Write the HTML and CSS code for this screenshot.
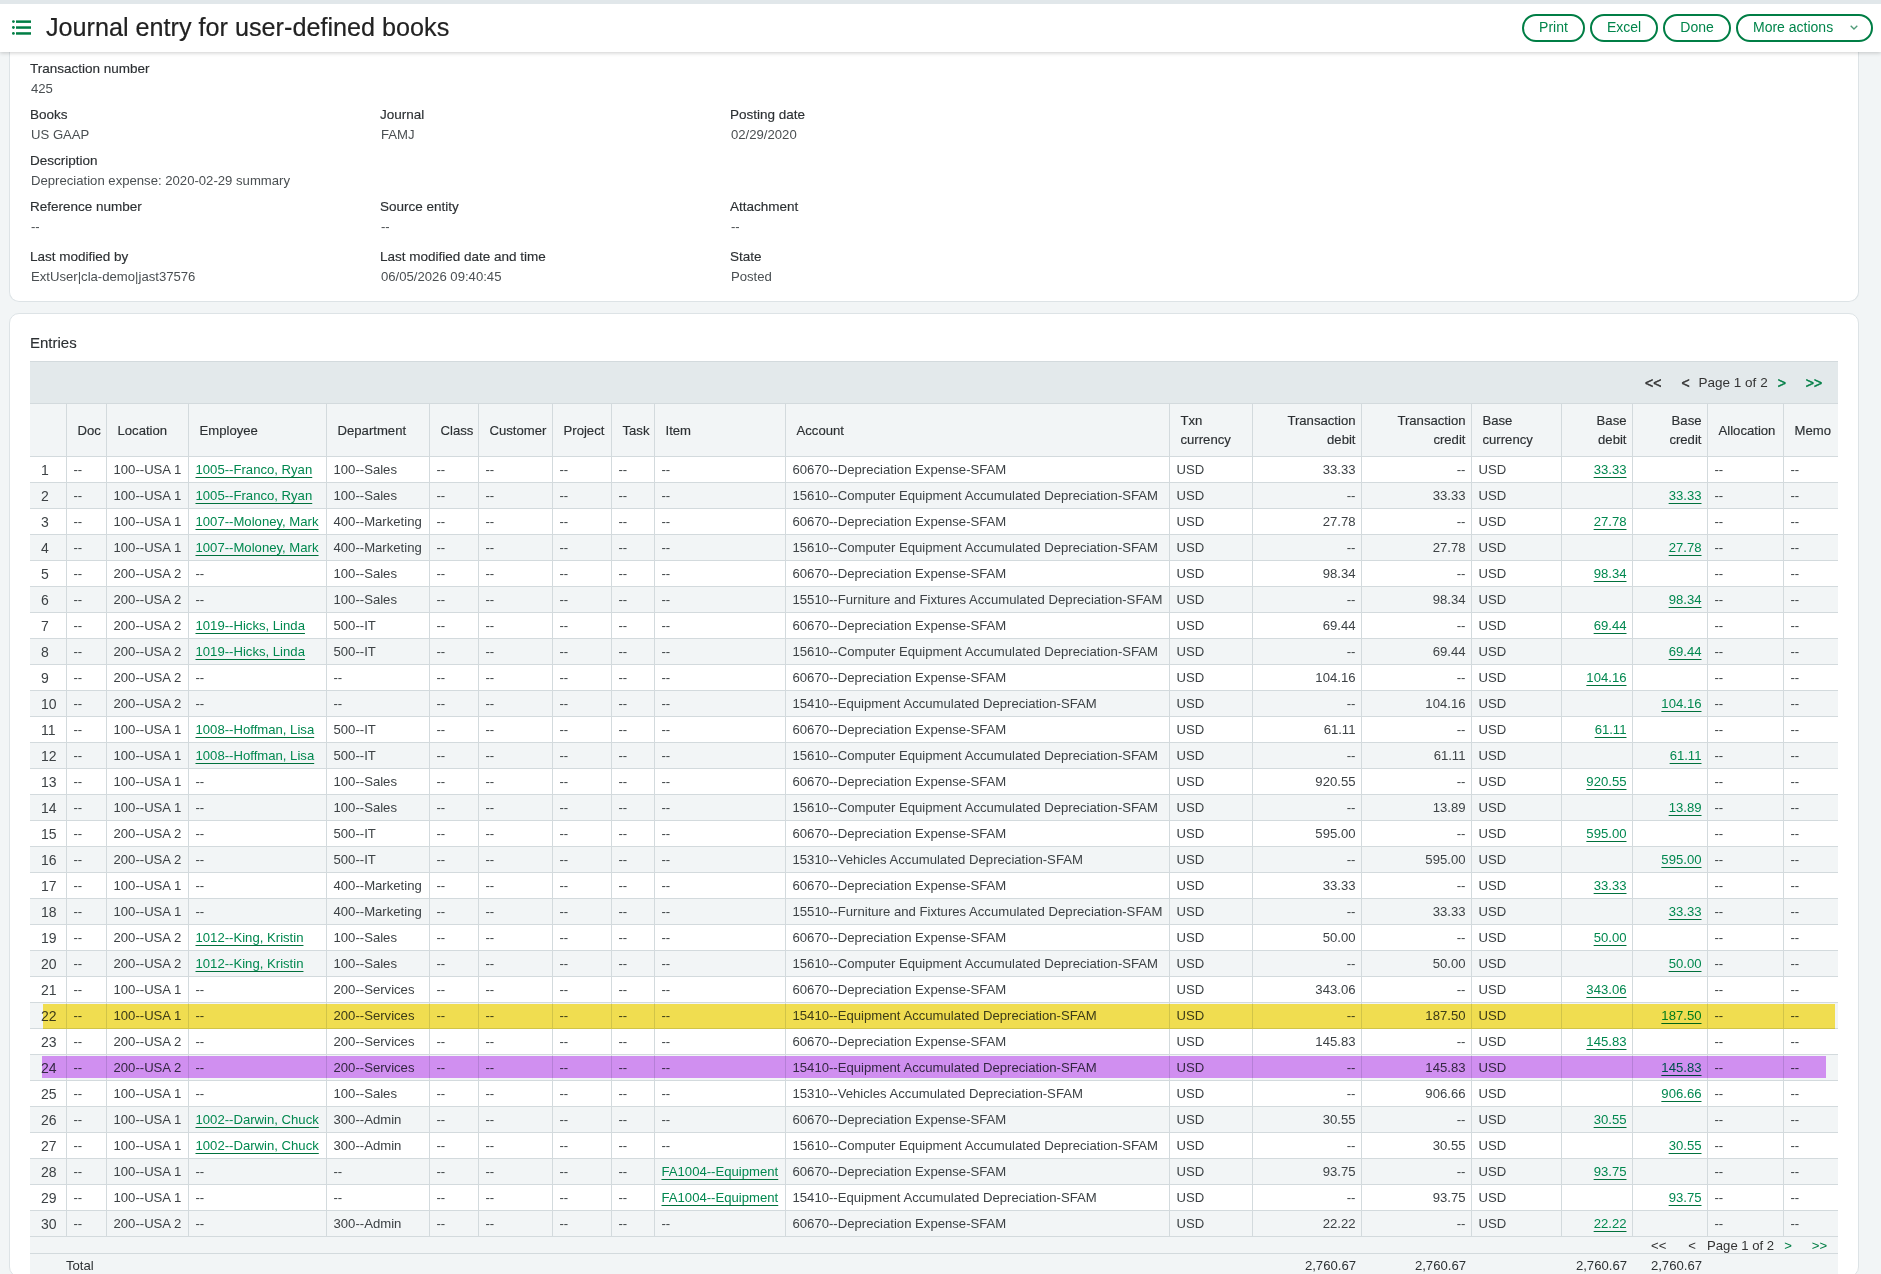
FILE: index.html
```html
<!DOCTYPE html>
<html lang="en">
  <head>
    <meta charset="utf-8">
    <meta name="viewport" content="width=device-width, initial-scale=1" />
    <title>Journal entry for user-defined books</title>
    <link rel="stylesheet" href="styles.css">
  </head>
  <body>
    <header class="page-header">
      <svg class="menu-icon" width="19" height="15" viewBox="0 0 19 15">
        <circle cx="1.4" cy="1.6" r="1.4"/>
        <circle cx="1.4" cy="7.5" r="1.4"/>
        <circle cx="1.4" cy="13.4" r="1.4"/>
        <rect x="4" y="0.4" width="15" height="2.5"/>
        <rect x="4" y="6.3" width="15" height="2.5"/>
        <rect x="4" y="12.2" width="15" height="2.5"/>
      </svg>
      <h1>Journal entry for user-defined books</h1>
      <div class="actions">
        <button class="btn btn-print">Print</button>
        <button class="btn btn-excel">Excel</button>
        <button class="btn btn-done">Done</button>
        <button class="btn btn-more">More actions
          <svg width="8" height="5" viewBox="0 0 8 5"><path d="M.7.7L4 4 7.3.7" fill="none" stroke="#4f9a78" stroke-width="1.3"/></svg>
        </button>
      </div>
    </header>

    <main class="content">
      <section class="card summary">
        <div class="field-row">
          <div class="field"><label>Transaction number</label><p>425</p></div>
        </div>
        <div class="field-row">
          <div class="field"><label>Books</label><p>US GAAP</p></div>
          <div class="field"><label>Journal</label><p>FAMJ</p></div>
          <div class="field"><label>Posting date</label><p>02/29/2020</p></div>
        </div>
        <div class="field-row">
          <div class="field wide"><label>Description</label><p>Depreciation expense: 2020-02-29 summary</p></div>
        </div>
        <div class="field-row">
          <div class="field"><label>Reference number</label><p>--</p></div>
          <div class="field"><label>Source entity</label><p>--</p></div>
          <div class="field"><label>Attachment</label><p>--</p></div>
        </div>
        <div class="field-row last">
          <div class="field"><label>Last modified by</label><p>ExtUser|cla-demo|jast37576</p></div>
          <div class="field"><label>Last modified date and time</label><p>06/05/2026 09:40:45</p></div>
          <div class="field"><label>State</label><p>Posted</p></div>
        </div>
      </section>

      <section class="card entries">
        <h2>Entries</h2>
        <table class="grid">
          <colgroup>
            <col class="c36"><col class="c40"><col class="c82"><col class="c138"><col class="c103"><col class="c49"><col class="c74"><col class="c59"><col class="c43"><col class="c131"><col class="c384"><col class="c83"><col class="c109"><col class="c110"><col class="c90"><col class="c71"><col class="c75"><col class="c76"><col class="c55">
          </colgroup>
          <thead>
            <tr class="toolbar">
              <td colspan="19">
                <div class="pager">
                  <b class="first">&lt;&lt;</b><b class="prev">&lt;</b><span>Page 1 of 2</span><b class="next">&gt;</b><b class="last">&gt;&gt;</b>
                </div>
              </td>
            </tr>
            <tr class="heads">
              <th></th><th>Doc</th><th>Location</th><th>Employee</th><th>Department</th><th>Class</th><th>Customer</th><th>Project</th><th>Task</th><th>Item</th><th>Account</th><th>Txn<br>currency</th><th>Transaction<br>debit</th><th>Transaction<br>credit</th><th>Base<br>currency</th><th>Base<br>debit</th><th>Base<br>credit</th><th>Allocation</th><th>Memo</th>
            </tr>
          </thead>
          <tbody>
            <tr><td>1</td><td>--</td><td>100--USA 1</td><td><a href="#">1005--Franco, Ryan</a></td><td>100--Sales</td><td>--</td><td>--</td><td>--</td><td>--</td><td>--</td><td>60670--Depreciation Expense-SFAM</td><td>USD</td><td>33.33</td><td>--</td><td>USD</td><td><a href="#">33.33</a></td><td></td><td>--</td><td>--</td></tr>
            <tr><td>2</td><td>--</td><td>100--USA 1</td><td><a href="#">1005--Franco, Ryan</a></td><td>100--Sales</td><td>--</td><td>--</td><td>--</td><td>--</td><td>--</td><td>15610--Computer Equipment Accumulated Depreciation-SFAM</td><td>USD</td><td>--</td><td>33.33</td><td>USD</td><td></td><td><a href="#">33.33</a></td><td>--</td><td>--</td></tr>
            <tr><td>3</td><td>--</td><td>100--USA 1</td><td><a href="#">1007--Moloney, Mark</a></td><td>400--Marketing</td><td>--</td><td>--</td><td>--</td><td>--</td><td>--</td><td>60670--Depreciation Expense-SFAM</td><td>USD</td><td>27.78</td><td>--</td><td>USD</td><td><a href="#">27.78</a></td><td></td><td>--</td><td>--</td></tr>
            <tr><td>4</td><td>--</td><td>100--USA 1</td><td><a href="#">1007--Moloney, Mark</a></td><td>400--Marketing</td><td>--</td><td>--</td><td>--</td><td>--</td><td>--</td><td>15610--Computer Equipment Accumulated Depreciation-SFAM</td><td>USD</td><td>--</td><td>27.78</td><td>USD</td><td></td><td><a href="#">27.78</a></td><td>--</td><td>--</td></tr>
            <tr><td>5</td><td>--</td><td>200--USA 2</td><td>--</td><td>100--Sales</td><td>--</td><td>--</td><td>--</td><td>--</td><td>--</td><td>60670--Depreciation Expense-SFAM</td><td>USD</td><td>98.34</td><td>--</td><td>USD</td><td><a href="#">98.34</a></td><td></td><td>--</td><td>--</td></tr>
            <tr><td>6</td><td>--</td><td>200--USA 2</td><td>--</td><td>100--Sales</td><td>--</td><td>--</td><td>--</td><td>--</td><td>--</td><td>15510--Furniture and Fixtures Accumulated Depreciation-SFAM</td><td>USD</td><td>--</td><td>98.34</td><td>USD</td><td></td><td><a href="#">98.34</a></td><td>--</td><td>--</td></tr>
            <tr><td>7</td><td>--</td><td>200--USA 2</td><td><a href="#">1019--Hicks, Linda</a></td><td>500--IT</td><td>--</td><td>--</td><td>--</td><td>--</td><td>--</td><td>60670--Depreciation Expense-SFAM</td><td>USD</td><td>69.44</td><td>--</td><td>USD</td><td><a href="#">69.44</a></td><td></td><td>--</td><td>--</td></tr>
            <tr><td>8</td><td>--</td><td>200--USA 2</td><td><a href="#">1019--Hicks, Linda</a></td><td>500--IT</td><td>--</td><td>--</td><td>--</td><td>--</td><td>--</td><td>15610--Computer Equipment Accumulated Depreciation-SFAM</td><td>USD</td><td>--</td><td>69.44</td><td>USD</td><td></td><td><a href="#">69.44</a></td><td>--</td><td>--</td></tr>
            <tr><td>9</td><td>--</td><td>200--USA 2</td><td>--</td><td>--</td><td>--</td><td>--</td><td>--</td><td>--</td><td>--</td><td>60670--Depreciation Expense-SFAM</td><td>USD</td><td>104.16</td><td>--</td><td>USD</td><td><a href="#">104.16</a></td><td></td><td>--</td><td>--</td></tr>
            <tr><td>10</td><td>--</td><td>200--USA 2</td><td>--</td><td>--</td><td>--</td><td>--</td><td>--</td><td>--</td><td>--</td><td>15410--Equipment Accumulated Depreciation-SFAM</td><td>USD</td><td>--</td><td>104.16</td><td>USD</td><td></td><td><a href="#">104.16</a></td><td>--</td><td>--</td></tr>
            <tr><td>11</td><td>--</td><td>100--USA 1</td><td><a href="#">1008--Hoffman, Lisa</a></td><td>500--IT</td><td>--</td><td>--</td><td>--</td><td>--</td><td>--</td><td>60670--Depreciation Expense-SFAM</td><td>USD</td><td>61.11</td><td>--</td><td>USD</td><td><a href="#">61.11</a></td><td></td><td>--</td><td>--</td></tr>
            <tr><td>12</td><td>--</td><td>100--USA 1</td><td><a href="#">1008--Hoffman, Lisa</a></td><td>500--IT</td><td>--</td><td>--</td><td>--</td><td>--</td><td>--</td><td>15610--Computer Equipment Accumulated Depreciation-SFAM</td><td>USD</td><td>--</td><td>61.11</td><td>USD</td><td></td><td><a href="#">61.11</a></td><td>--</td><td>--</td></tr>
            <tr><td>13</td><td>--</td><td>100--USA 1</td><td>--</td><td>100--Sales</td><td>--</td><td>--</td><td>--</td><td>--</td><td>--</td><td>60670--Depreciation Expense-SFAM</td><td>USD</td><td>920.55</td><td>--</td><td>USD</td><td><a href="#">920.55</a></td><td></td><td>--</td><td>--</td></tr>
            <tr><td>14</td><td>--</td><td>100--USA 1</td><td>--</td><td>100--Sales</td><td>--</td><td>--</td><td>--</td><td>--</td><td>--</td><td>15610--Computer Equipment Accumulated Depreciation-SFAM</td><td>USD</td><td>--</td><td>13.89</td><td>USD</td><td></td><td><a href="#">13.89</a></td><td>--</td><td>--</td></tr>
            <tr><td>15</td><td>--</td><td>200--USA 2</td><td>--</td><td>500--IT</td><td>--</td><td>--</td><td>--</td><td>--</td><td>--</td><td>60670--Depreciation Expense-SFAM</td><td>USD</td><td>595.00</td><td>--</td><td>USD</td><td><a href="#">595.00</a></td><td></td><td>--</td><td>--</td></tr>
            <tr><td>16</td><td>--</td><td>200--USA 2</td><td>--</td><td>500--IT</td><td>--</td><td>--</td><td>--</td><td>--</td><td>--</td><td>15310--Vehicles Accumulated Depreciation-SFAM</td><td>USD</td><td>--</td><td>595.00</td><td>USD</td><td></td><td><a href="#">595.00</a></td><td>--</td><td>--</td></tr>
            <tr><td>17</td><td>--</td><td>100--USA 1</td><td>--</td><td>400--Marketing</td><td>--</td><td>--</td><td>--</td><td>--</td><td>--</td><td>60670--Depreciation Expense-SFAM</td><td>USD</td><td>33.33</td><td>--</td><td>USD</td><td><a href="#">33.33</a></td><td></td><td>--</td><td>--</td></tr>
            <tr><td>18</td><td>--</td><td>100--USA 1</td><td>--</td><td>400--Marketing</td><td>--</td><td>--</td><td>--</td><td>--</td><td>--</td><td>15510--Furniture and Fixtures Accumulated Depreciation-SFAM</td><td>USD</td><td>--</td><td>33.33</td><td>USD</td><td></td><td><a href="#">33.33</a></td><td>--</td><td>--</td></tr>
            <tr><td>19</td><td>--</td><td>200--USA 2</td><td><a href="#">1012--King, Kristin</a></td><td>100--Sales</td><td>--</td><td>--</td><td>--</td><td>--</td><td>--</td><td>60670--Depreciation Expense-SFAM</td><td>USD</td><td>50.00</td><td>--</td><td>USD</td><td><a href="#">50.00</a></td><td></td><td>--</td><td>--</td></tr>
            <tr><td>20</td><td>--</td><td>200--USA 2</td><td><a href="#">1012--King, Kristin</a></td><td>100--Sales</td><td>--</td><td>--</td><td>--</td><td>--</td><td>--</td><td>15610--Computer Equipment Accumulated Depreciation-SFAM</td><td>USD</td><td>--</td><td>50.00</td><td>USD</td><td></td><td><a href="#">50.00</a></td><td>--</td><td>--</td></tr>
            <tr><td>21</td><td>--</td><td>100--USA 1</td><td>--</td><td>200--Services</td><td>--</td><td>--</td><td>--</td><td>--</td><td>--</td><td>60670--Depreciation Expense-SFAM</td><td>USD</td><td>343.06</td><td>--</td><td>USD</td><td><a href="#">343.06</a></td><td></td><td>--</td><td>--</td></tr>
            <tr class="mark-yellow"><td>22</td><td>--</td><td>100--USA 1</td><td>--</td><td>200--Services</td><td>--</td><td>--</td><td>--</td><td>--</td><td>--</td><td>15410--Equipment Accumulated Depreciation-SFAM</td><td>USD</td><td>--</td><td>187.50</td><td>USD</td><td></td><td><a href="#">187.50</a></td><td>--</td><td>--</td></tr>
            <tr><td>23</td><td>--</td><td>200--USA 2</td><td>--</td><td>200--Services</td><td>--</td><td>--</td><td>--</td><td>--</td><td>--</td><td>60670--Depreciation Expense-SFAM</td><td>USD</td><td>145.83</td><td>--</td><td>USD</td><td><a href="#">145.83</a></td><td></td><td>--</td><td>--</td></tr>
            <tr class="mark-purple"><td>24</td><td>--</td><td>200--USA 2</td><td>--</td><td>200--Services</td><td>--</td><td>--</td><td>--</td><td>--</td><td>--</td><td>15410--Equipment Accumulated Depreciation-SFAM</td><td>USD</td><td>--</td><td>145.83</td><td>USD</td><td></td><td><a href="#">145.83</a></td><td>--</td><td>--</td></tr>
            <tr><td>25</td><td>--</td><td>100--USA 1</td><td>--</td><td>100--Sales</td><td>--</td><td>--</td><td>--</td><td>--</td><td>--</td><td>15310--Vehicles Accumulated Depreciation-SFAM</td><td>USD</td><td>--</td><td>906.66</td><td>USD</td><td></td><td><a href="#">906.66</a></td><td>--</td><td>--</td></tr>
            <tr><td>26</td><td>--</td><td>100--USA 1</td><td><a href="#">1002--Darwin, Chuck</a></td><td>300--Admin</td><td>--</td><td>--</td><td>--</td><td>--</td><td>--</td><td>60670--Depreciation Expense-SFAM</td><td>USD</td><td>30.55</td><td>--</td><td>USD</td><td><a href="#">30.55</a></td><td></td><td>--</td><td>--</td></tr>
            <tr><td>27</td><td>--</td><td>100--USA 1</td><td><a href="#">1002--Darwin, Chuck</a></td><td>300--Admin</td><td>--</td><td>--</td><td>--</td><td>--</td><td>--</td><td>15610--Computer Equipment Accumulated Depreciation-SFAM</td><td>USD</td><td>--</td><td>30.55</td><td>USD</td><td></td><td><a href="#">30.55</a></td><td>--</td><td>--</td></tr>
            <tr><td>28</td><td>--</td><td>100--USA 1</td><td>--</td><td>--</td><td>--</td><td>--</td><td>--</td><td>--</td><td><a href="#">FA1004--Equipment</a></td><td>60670--Depreciation Expense-SFAM</td><td>USD</td><td>93.75</td><td>--</td><td>USD</td><td><a href="#">93.75</a></td><td></td><td>--</td><td>--</td></tr>
            <tr><td>29</td><td>--</td><td>100--USA 1</td><td>--</td><td>--</td><td>--</td><td>--</td><td>--</td><td>--</td><td><a href="#">FA1004--Equipment</a></td><td>15410--Equipment Accumulated Depreciation-SFAM</td><td>USD</td><td>--</td><td>93.75</td><td>USD</td><td></td><td><a href="#">93.75</a></td><td>--</td><td>--</td></tr>
            <tr><td>30</td><td>--</td><td>200--USA 2</td><td>--</td><td>300--Admin</td><td>--</td><td>--</td><td>--</td><td>--</td><td>--</td><td>60670--Depreciation Expense-SFAM</td><td>USD</td><td>22.22</td><td>--</td><td>USD</td><td><a href="#">22.22</a></td><td></td><td>--</td><td>--</td></tr>
          </tbody>
          <tfoot>
            <tr class="foot-pager">
              <td colspan="19">
                <div class="pager small">
                  <span class="first">&lt;&lt;</span><span class="prev">&lt;</span><span>Page 1 of 2</span><span class="next">&gt;</span><span class="last">&gt;&gt;</span>
                </div>
              </td>
            </tr>
            <tr class="totals">
              <td></td><td colspan="11">Total</td><td>2,760.67</td><td>2,760.67</td><td></td><td>2,760.67</td><td>2,760.67</td><td></td><td></td>
            </tr>
          </tfoot>
        </table>
      </section>
    </main>
  </body>
</html>
```

FILE: styles.css
```css
html, body{
  margin: 0;
  height: 1274px;
  overflow: hidden;
}

body{
  background: #f2f5f6;
  font-family: "Liberation Sans", Arial, sans-serif;
  font-size: 13.13px;
  color: #3d4245;
  border-top: 4px solid #e1e7ea;
}

/* Page header */
.page-header{
  position: relative;
  z-index: 2;
  display: flex;
  align-items: center;
  height: 48px;
  padding: 0 8px 0 12px;
  background: #fff;
  box-shadow: 0 1px 4px rgba(0,0,0,.2);
}

.menu-icon{
  fill: #007e45;
  margin: -2px 15px 0 0;
}

.page-header h1{
  margin: -2px 0 0;
  font-size: 25.2px;
  font-weight: normal;
  color: #222;
  -webkit-text-stroke: .2px #222;
}

.actions{
  display: flex;
  gap: 5px;
  margin-left: auto;
}

.btn{
  display: flex;
  align-items: center;
  justify-content: center;
  height: 28px;
  padding: 0 0 2px;
  border: 2px solid #007e45;
  border-radius: 14px;
  background: #fff;
  color: #00854b;
  font-family: inherit;
  font-size: 14px;
}

.btn-print{ width: 63px; }
.btn-excel{ width: 68px; }
.btn-done{ width: 68px; }
.btn-more{ width: 137px; justify-content: flex-start; padding-left: 15px; }
.btn-more svg{ margin-left: 17px; }

/* Cards */
.content{
  padding: 0 22px 0 9px;
}

.card{
  background: #fff;
  border: 1px solid #dde3e6;
  border-radius: 10px;
  padding: 0 20px;
}

/* Summary fields */
.summary{
  height: 250px;
  box-sizing: border-box;
  border-top: none;
  border-radius: 0 0 10px 10px;
  padding-top: 7px;
  margin-bottom: 11px;
}

.field-row{
  display: grid;
  grid-template-columns: repeat(3, 350px);
  height: 46px;
}

.field-row.last{
  margin-top: 4px;
}

.field label{
  display: block;
  font-size: 13.5px;
  line-height: 20px;
  color: #2c3033;
  -webkit-text-stroke: .15px #2c3033;
}

.field p{
  margin: 0 0 0 1px;
  line-height: 20px;
  color: #4a4f52;
}

.field.wide{
  grid-column: 1 / -1;
}

/* Entries table */
.entries h2{
  margin: 0;
  padding: 19px 0 8px;
  font-size: 15px;
  line-height: 20px;
  font-weight: normal;
  color: #2c3033;
  -webkit-text-stroke: .15px #2c3033;
}

.grid{
  table-layout: fixed;
  border-collapse: collapse;
  width: 1808px;
}

.c36{ width: 36px; } .c40{ width: 40px; } .c82{ width: 82px; } .c138{ width: 138px; }
.c103{ width: 103px; } .c49{ width: 49px; } .c74{ width: 74px; } .c59{ width: 59px; }
.c43{ width: 43px; } .c131{ width: 131px; } .c384{ width: 384px; } .c83{ width: 83px; }
.c109{ width: 109px; } .c110{ width: 110px; } .c90{ width: 90px; } .c71{ width: 71px; }
.c75{ width: 75px; } .c76{ width: 76px; } .c55{ width: 55px; }

.toolbar td{
  height: 41px;
  padding: 0;
  background: #e3e9eb;
  border-top: 1px solid #d3dadd;
  border-bottom: 1px solid #d3dadd;
}

.pager{
  display: flex;
  justify-content: flex-end;
  align-items: center;
  padding-right: 16px;
  color: #333;
  font-size: 13.5px;
}

.pager b{
  font-size: 14px;
  font-weight: normal;
  -webkit-text-stroke: .5px currentColor;
}

.pager .first{ margin-right: 20px; }
.pager .prev{ margin-right: 9px; }
.pager .next{ margin-left: 10px; margin-right: 20px; color: #007e45; }
.pager .last{ color: #007e45; }

.pager.small{
  padding: 1px 11px 0 0;
  font-size: 13.13px;
  line-height: 15px;
}

.pager.small .first{ margin-right: 22px; }
.pager.small .prev{ margin-right: 11px; }

.heads th{
  height: 53px;
  box-sizing: border-box;
  padding: 0 5px 0 11px;
  background: #f2f5f6;
  border-left: 1px solid #d3dadd;
  border-bottom: 1px solid #d3dadd;
  font-weight: normal;
  line-height: 19px;
  text-align: left;
  color: #2c3033;
  -webkit-text-stroke: .15px #2c3033;
}

.heads th:first-child{ border-left: none; }

tbody tr{
  position: relative;
  background: #fff;
}

tbody tr:nth-child(even){
  background: #f2f5f6;
}

tbody td{
  height: 26px;
  box-sizing: border-box;
  padding: 0 5px 0 7px;
  border-left: 1px solid #d3dadd;
  border-bottom: 1px solid #d3dadd;
  white-space: nowrap;
  overflow: hidden;
}

tbody td:first-child{
  border-left: none;
  padding-left: 11px;
  font-size: 14px;
}

.heads th:nth-child(13), .heads th:nth-child(14), .heads th:nth-child(16), .heads th:nth-child(17),
tbody td:nth-child(13), tbody td:nth-child(14), tbody td:nth-child(16), tbody td:nth-child(17){
  text-align: right;
}

tbody a{
  color: #00884f;
  text-decoration-color: #00703c;
  text-underline-offset: 3px;
}

/* Highlights lie over the row and tint it */
.mark-yellow::after, .mark-purple::after{
  content: '';
  position: absolute;
  mix-blend-mode: multiply;
}

.mark-yellow::after{
  top: 1px;
  bottom: 0;
  left: 13px;
  right: 3px;
  background: #fde653;
}

.mark-purple::after{
  top: 1px;
  bottom: 3px;
  left: 12px;
  right: 12px;
  background: #db95f9;
}

.foot-pager td{
  height: 16px;
  padding: 0;
  background: #f2f5f6;
  border-bottom: 1px solid #d3dadd;
}

.totals td{
  height: 22px;
  padding: 0 5px 0 0;
  background: #f2f5f6;
  color: #2c3033;
}

.totals td:nth-child(n+3){
  text-align: right;
}
```
